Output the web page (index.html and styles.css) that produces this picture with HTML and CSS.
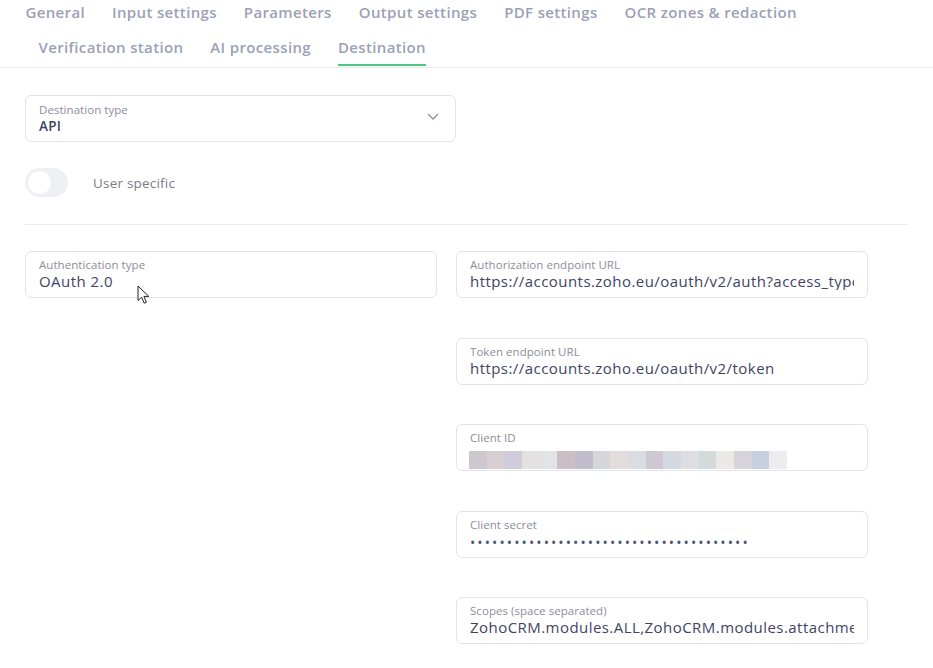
FILE: index.html
```html
<!DOCTYPE html>
<html lang="en">
<head>
  <meta charset="UTF-8" />
  <title>Destination settings</title>
  <link rel="stylesheet" href="styles.css">
</head>
<body>
  <nav class="tabs">
    <div class="tab-row">
      <a href="#">General</a>
      <a href="#">Input settings</a>
      <a href="#">Parameters</a>
      <a href="#">Output settings</a>
      <a href="#">PDF settings</a>
      <a href="#">OCR zones &amp; redaction</a>
    </div>
    <div class="tab-row second">
      <a href="#">Verification station</a>
      <a href="#">AI processing</a>
      <a href="#" class="active">Destination</a>
    </div>
  </nav>

  <div class="content">
    <div class="field select">
      <div>
        <div class="label">Destination type</div>
        <div class="value">API</div>
      </div>
      <svg class="chevron" width="12" height="8" viewBox="0 0 12 8"><path d="M1.5 1.5 L6 6 L10.5 1.5" fill="none" stroke="#8a8ea3" stroke-width="1.4" stroke-linecap="round" stroke-linejoin="round"/></svg>
    </div>

    <div class="switch-row">
      <span class="switch"><span class="knob"></span></span>
      <span class="switch-label">User specific</span>
    </div>

    <hr class="divider">

    <div class="grid">
      <div class="col">
        <div class="field pointer-host">
          <div class="label">Authentication type</div>
          <div class="value">OAuth 2.0</div>
          <svg class="cursor" width="14" height="20" viewBox="0 0 14 20"><path d="M1 1 L1 15.5 L4.6 12.2 L7.2 18.2 L9.4 17.2 L6.9 11.4 L11.8 11.4 Z" fill="#fff" stroke="#222" stroke-width="1" stroke-linejoin="round"/></svg>
        </div>
      </div>
      <div class="col right">
        <div class="field">
          <div class="label">Authorization endpoint URL</div>
          <div class="value clip">https://accounts.zoho.eu/oauth/v2/auth?access_type=offline</div>
        </div>
        <div class="field">
          <div class="label">Token endpoint URL</div>
          <div class="value">https://accounts.zoho.eu/oauth/v2/token</div>
        </div>
        <div class="field">
          <div class="label">Client ID</div>
          <div class="blur">
            <span style="background:#cdc7d0"></span><span style="background:#d9cfd2"></span><span style="background:#cfcdd9"></span><span style="background:#e3e2e1"></span><span style="background:#e3e3e6"></span><span style="background:#cbbfc5"></span><span style="background:#c0bccb"></span><span style="background:#d5d6d7"></span><span style="background:#e2dcdb"></span><span style="background:#d9dce3"></span><span style="background:#cfc7d1"></span><span style="background:#d4d8e1"></span><span style="background:#dddde2"></span><span style="background:#d3dadb"></span><span style="background:#ece8e5"></span><span style="background:#d6d3dd"></span><span style="background:#c6d0df"></span><span style="background:#ececf1"></span>
          </div>
        </div>
        <div class="field">
          <div class="label">Client secret</div>
          <div class="value dots">••••••••••••••••••••••••••••••••••••••</div>
        </div>
        <div class="field">
          <div class="label">Scopes (space separated)</div>
          <div class="value clip">ZohoCRM.modules.ALL,ZohoCRM.modules.attachments.ALL</div>
        </div>
      </div>
    </div>
  </div>
</body>
</html>
```

FILE: styles.css
```css
:root {
  --tab: #9c9fb6;
  --green: #4cc983;
  --line: #e9ecf1;
  --border: #e3e3ec;
  --label: #8d8d99;
  --value: #3f4463;
}
* {
  box-sizing: border-box;
  font-family: 'Open Sans', 'Noto Sans', sans-serif;
}
body {
  margin: 0;
  background: #fff;
  color: var(--value);
}
.tabs {
  border-bottom: 1px solid var(--line);
  padding-left: 12px;
}
.tab-row {
  display: flex;
  height: 27px;
  margin-top: -1px;
}
.tab-row.second {
  padding-left: 13px;
  height: 41px;
  margin-top: 0;
}
.tab-row a {
  display: block;
  padding: 0 13.5px;
  font-size: 15px;
  font-weight: 600;
  color: var(--tab);
  text-decoration: none;
  letter-spacing: 0.35px;
  line-height: 27px;
}
.tab-row.second a {
  line-height: 40px;
  height: 41px;
  padding-top: 1px;
}
.tab-row a.active {
  position: relative;
}
.tab-row a.active::after {
  content: "";
  position: absolute;
  left: 13.5px;
  right: 13.5px;
  bottom: 1px;
  height: 2px;
  background: var(--green);
}
.content {
  padding: 27px 25px 0 25px;
}
.field {
  height: 47px;
  border: 1px solid var(--border);
  border-radius: 6px;
  padding: 5px 13px 0 13px;
  background: #fff;
}
.label {
  font-size: 11.5px;
  color: var(--label);
  line-height: 15px;
  letter-spacing: 0.05px;
}
.value {
  font-size: 15px;
  font-weight: 500;
  color: var(--value);
  line-height: 18px;
  white-space: nowrap;
  letter-spacing: 0.45px;
}
.value.clip {
  overflow: hidden;
}
.select {
  width: 431px;
  display: flex;
  justify-content: space-between;
  align-items: center;
  padding-top: 0;
}
.select .value {
  font-size: 13.5px;
  font-weight: 600;
  letter-spacing: 0.3px;
}
.chevron {
  margin-right: 3px;
  margin-top: -3px;
}
.switch-row {
  display: flex;
  align-items: center;
  margin-top: 26px;
  height: 29px;
}
.switch {
  width: 43px;
  height: 29px;
  border-radius: 15px;
  background: #eef0f3;
  padding: 3px;
  display: flex;
}
.knob {
  width: 23px;
  height: 23px;
  border-radius: 50%;
  background: #fff;
  box-shadow: 0 0 1px rgba(0, 0, 0, 0.05);
}
.switch-label {
  margin-left: 25px;
  font-size: 13.5px;
  color: #7b7b88;
  letter-spacing: 0.2px;
}
.divider {
  border: none;
  border-top: 1px solid var(--line);
  margin: 27px 0 26px 0;
}
.grid {
  display: grid;
  grid-template-columns: 412px 412px;
  column-gap: 19px;
}
.col {
  display: flex;
  flex-direction: column;
  gap: 39.5px;
}
.pointer-host {
  position: relative;
}
.cursor {
  position: absolute;
  left: 111px;
  top: 33px;
}
.blur {
  display: flex;
  width: 318px;
  margin-top: 6px;
  margin-left: -1px;
}
.blur span {
  flex: 1;
  height: 18px;
}
.dots {
  font-size: 14px;
  letter-spacing: 2.1px;
  color: #4f5576;
  margin-top: 2px;
}
```
